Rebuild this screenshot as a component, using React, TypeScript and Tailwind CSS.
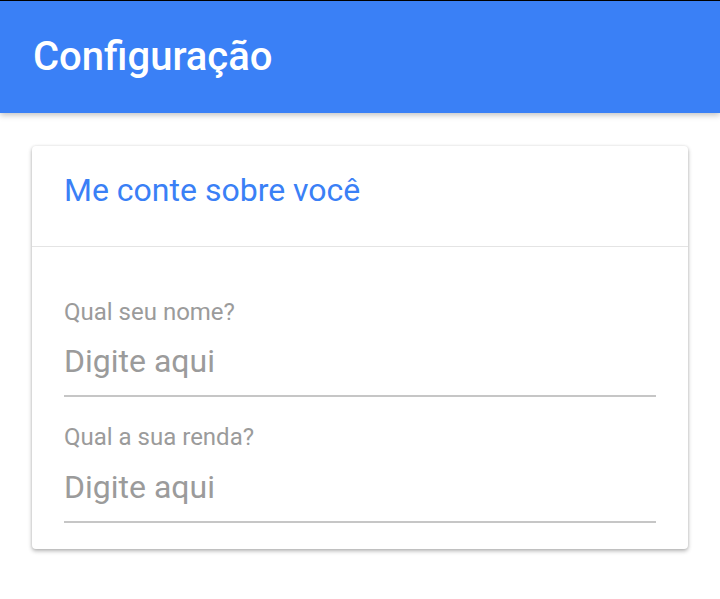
export default function App() {
  return (
    <div className="w-[720px] h-[599px] bg-white" style={{ fontFamily: 'Roboto, "Liberation Sans", sans-serif' }}>
      <div className="h-px bg-black" />
      <header className="h-[112px] bg-[#3a80f6] flex items-center pl-[33px] shadow-[0_2px_6px_rgba(0,0,0,0.25)] relative">
        <h1 className="text-white text-[40px] leading-none font-medium">Configuração</h1>
      </header>
      <div className="mx-[32px] mt-[33px] bg-white rounded shadow-[0_2px_4px_rgba(0,0,0,0.3),0_0_3px_rgba(0,0,0,0.08)]">
        <div className="h-[101px] flex items-center px-[32px] border-b border-[#e4e4e4]">
          <h2 className="text-[#3a80f6] text-[32px] leading-[40px] -mt-[12px]">Me conte sobre você</h2>
        </div>
        <div className="px-[32px] pt-[51px] pb-[26px]">
          <div>
            <div className="text-[24px] leading-[28px] text-[#9b9b9b]">Qual seu nome?</div>
            <div className="mt-[15px] pb-[14px] border-b-2 border-[#c6c6c6] text-[32px] leading-[40px] text-[#9b9b9b]">Digite aqui</div>
          </div>
          <div className="mt-[26px]">
            <div className="text-[24px] leading-[28px] text-[#9b9b9b]">Qual a sua renda?</div>
            <div className="mt-[16px] pb-[14px] border-b-2 border-[#c6c6c6] text-[32px] leading-[40px] text-[#9b9b9b]">Digite aqui</div>
          </div>
        </div>
      </div>
    </div>
  );
}
